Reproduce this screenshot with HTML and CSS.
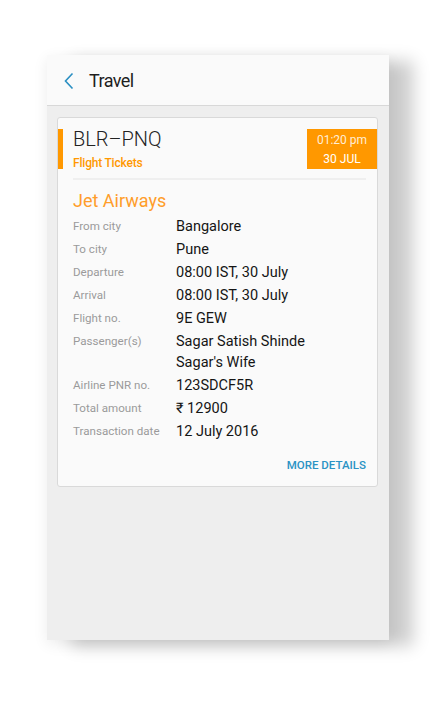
FILE: index.html
```html
<!DOCTYPE html>
<html>
<head>
<meta charset="utf-8">
<link rel="stylesheet" href="styles.css">
</head>
<body>
<div class="screen">
  <header class="appbar">
    <svg class="back" width="10" height="18" viewBox="0 0 10 18"><path d="M8.5 1.5 L1.5 9 L8.5 16.5" fill="none" stroke="#2a8fc2" stroke-width="1.6"/></svg>
    <span class="title">Travel</span>
  </header>
  <main class="content">
    <section class="card">
      <div class="card-top">
        <div class="accent"></div>
        <div class="route">
          <div class="route-code">BLR–PNQ</div>
          <div class="route-type">Flight Tickets</div>
        </div>
        <div class="when">
          <div class="when-time">01:20 pm</div>
          <div class="when-date">30 JUL</div>
        </div>
      </div>
      <div class="card-body">
        <h2 class="airline">Jet Airways</h2>
        <div class="rows">
          <div class="row"><span class="label">From city</span><span class="value">Bangalore</span></div>
          <div class="row"><span class="label">To city</span><span class="value">Pune</span></div>
          <div class="row"><span class="label">Departure</span><span class="value">08:00 IST, 30 July</span></div>
          <div class="row"><span class="label">Arrival</span><span class="value">08:00 IST, 30 July</span></div>
          <div class="row"><span class="label">Flight no.</span><span class="value">9E GEW</span></div>
          <div class="row"><span class="label">Passenger(s)</span><span class="value">Sagar Satish Shinde<br>Sagar's Wife</span></div>
          <div class="row"><span class="label">Airline PNR no.</span><span class="value">123SDCF5R</span></div>
          <div class="row"><span class="label">Total amount</span><span class="value">₹ 12900</span></div>
          <div class="row"><span class="label">Transaction date</span><span class="value">12 July 2016</span></div>
        </div>
        <div class="actions"><span class="more">MORE DETAILS</span></div>
      </div>
    </section>
  </main>
</div>
</body>
</html>
```
FILE: styles.css
```css
html, body {
  margin: 0;
  padding: 0;
  background: #ffffff;
}
body {
  font-family: Roboto, "Noto Sans", sans-serif;
  width: 436px;
  height: 702px;
  overflow: hidden;
}
.screen {
  margin: 55px 0 0 47px;
  width: 342px;
  height: 585px;
  background: #eeeeee;
  box-shadow: 0 4px 14px rgba(0,0,0,0.08), 24px 6px 16px rgba(0,0,0,0.2);
  display: flex;
  flex-direction: column;
}
.appbar {
  height: 50px;
  background: #fafafa;
  border-bottom: 1px solid #d8d8d8;
  display: flex;
  align-items: center;
  padding-left: 17px;
  gap: 15px;
}
.back { display: block; margin-top: 1px; }
.title {
  font-size: 18px;
  color: #1e1e1e;
  letter-spacing: -0.6px;
}
.content {
  padding: 11px 11px 0 10px;
}
.card {
  background: #fafafa;
  border: 1px solid #d9d9d9;
  border-radius: 3px;
  padding-top: 11px;
  padding-bottom: 14px;
}
.card-top {
  display: flex;
  height: 40px;
}
.accent {
  width: 5px;
  background: #ff9800;
}
.route {
  flex: 1;
  padding-left: 10px;
}
.route-code {
  font-size: 20px;
  font-weight: 300;
  color: #222;
  line-height: 22px;
  margin-top: -1px;
}
.route-type {
  font-size: 12px;
  font-weight: 500;
  color: #ff9800;
  margin-top: 6px;
  letter-spacing: -0.2px;
}
.when {
  width: 70px;
  background: #ff9800;
  color: #fff;
  text-align: center;
  font-size: 12px;
  display: flex;
  flex-direction: column;
  justify-content: center;
  gap: 5px;
  padding-top: 1px;
}
.when-time { color: rgba(255,255,255,0.85); }
.card-body {
  margin: 9px 11px 0 15px;
  border-top: 2px solid #efefef;
}
.airline {
  margin: 10px 0 4px;
  font-size: 18px;
  font-weight: 400;
  color: #ff9d2a;
  line-height: 22px;
}
.rows {
  display: flex;
  flex-direction: column;
  gap: 2px;
}
.row {
  display: flex;
  line-height: 21px;
}
.label {
  width: 103px;
  flex: none;
  font-size: 11.6px;
  color: #9a9a9a;
}
.value {
  font-size: 14.5px;
  color: #151515;
}
.actions {
  display: flex;
  justify-content: flex-end;
  margin-top: 16px;
}
.more {
  font-size: 11.5px;
  font-weight: 500;
  color: #2b93c4;
}
```
